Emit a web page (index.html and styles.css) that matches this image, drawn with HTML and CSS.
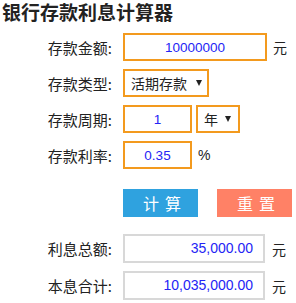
FILE: index.html
```html
<!DOCTYPE html>
<html lang="zh-CN">
<head>
    <meta charset="UTF-8">
    <meta name="viewport" content="width=device-width, initial-scale=1.0">
    <title>银行存款利息计算器</title>
    <link rel="stylesheet" href="styles.css">
</head>
<body>
    <h1 class="title">银行存款利息计算器</h1>
    <form class="calc" id="calc">
        <div class="row">
            <label class="label" for="amount">存款金额:</label>
            <input class="field wide" type="text" id="amount" value="10000000">
            <span class="unit">元</span>
        </div>
        <div class="row">
            <label class="label" for="type">存款类型:</label>
            <span class="pick pick-type">
                <select id="type">
                    <option>活期存款</option>
                    <option>定期存款</option>
                </select>
            </span>
        </div>
        <div class="row">
            <label class="label" for="period">存款周期:</label>
            <input class="field short" type="text" id="period" value="1">
            <span class="pick pick-unit">
                <select id="periodUnit">
                    <option>年</option>
                    <option>月</option>
                </select>
            </span>
        </div>
        <div class="row">
            <label class="label" for="rate">存款利率:</label>
            <input class="field short" type="text" id="rate" value="0.35">
            <span class="unit">%</span>
        </div>
        <div class="actions">
            <button type="button" class="btn btn-calc" onclick="calc()">计算</button>
            <button type="reset" class="btn btn-reset">重置</button>
        </div>
        <div class="row result">
            <span class="label">利息总额:</span>
            <div class="out" id="interest">35,000.00</div>
            <span class="unit">元</span>
        </div>
        <div class="row result">
            <span class="label">本息合计:</span>
            <div class="out" id="total">10,035,000.00</div>
            <span class="unit">元</span>
        </div>
    </form>
    <script>
        function money(n) {
            return n.toLocaleString('en-US', {minimumFractionDigits: 2, maximumFractionDigits: 2});
        }
        function calc() {
            let amount = parseFloat(document.getElementById("amount").value) || 0;
            let period = parseFloat(document.getElementById("period").value) || 0;
            let rate = parseFloat(document.getElementById("rate").value) || 0;
            if (document.getElementById("periodUnit").value === "月") period = period / 12;
            let interest = amount * rate / 100 * period;
            document.getElementById("interest").innerText = money(interest);
            document.getElementById("total").innerText = money(amount + interest);
        }
    </script>
</body>
</html>
```

FILE: styles.css
```css
body {
    margin: 0;
    font-family: "Liberation Sans", "Noto Sans CJK SC", sans-serif;
    color: #222;
}
.title {
    margin: 0 0 9px 2px;
    font-size: 19px;
    line-height: 24px;
    font-weight: bold;
    font-family: "Noto Sans CJK SC", sans-serif;
}
.row {
    display: flex;
    align-items: center;
    height: 28px;
    margin-bottom: 8px;
}
.label {
    width: 112px;
    margin-right: 11px;
    text-align: right;
    font-size: 15px;
    font-family: "Noto Sans CJK SC", sans-serif;
}
.field {
    box-sizing: border-box;
    height: 28px;
    border: 2px solid #f39a1e;
    outline: none;
    padding: 0 4px;
    text-align: center;
    font-family: "Liberation Sans", sans-serif;
    font-size: 13.5px;
    color: #2424f5;
}
.wide {
    width: 144px;
}
.short {
    width: 69px;
}
.unit {
    margin-left: 6px;
    font-size: 14px;
    font-family: "Liberation Sans", "Noto Sans CJK SC", sans-serif;
}
.pick {
    position: relative;
    display: inline-block;
}
.pick select {
    appearance: none;
    -webkit-appearance: none;
    box-sizing: border-box;
    height: 28px;
    border: 2px solid #f39a1e;
    border-radius: 0;
    background: #fff;
    outline: none;
    padding: 0 0 0 6px;
    font-size: 14px;
    font-family: "Noto Sans CJK SC", sans-serif;
    color: #222;
}
.pick::after {
    content: "";
    position: absolute;
    top: 11px;
    border-left: 3px solid transparent;
    border-right: 3px solid transparent;
    border-top: 6px solid #222;
    pointer-events: none;
}
.pick-type select {
    width: 86px;
}
.pick-type::after {
    left: 73px;
}
.pick-unit {
    margin-left: 4px;
}
.pick-unit select {
    width: 44px;
}
.pick-unit::after {
    left: 29px;
}
.actions {
    display: flex;
    gap: 19px;
    margin: 20px 0 17px 123px;
}
.btn {
    box-sizing: border-box;
    width: 75px;
    height: 28px;
    border: none;
    padding: 0 0 0 9px;
    color: #fff;
    font-size: 16px;
    letter-spacing: 6px;
    font-family: "Noto Sans CJK SC", sans-serif;
    cursor: pointer;
}
.btn-calc {
    background: #2fa2df;
}
.btn-reset {
    background: #ff8166;
}
.result {
    height: 29px;
}
.out {
    box-sizing: border-box;
    width: 142px;
    height: 29px;
    line-height: 25px;
    border: 2px solid #d8d8d8;
    padding-right: 10px;
    text-align: right;
    font-size: 14px;
    color: #2424f5;
}
.result .unit {
    margin-left: 7px;
}
```
